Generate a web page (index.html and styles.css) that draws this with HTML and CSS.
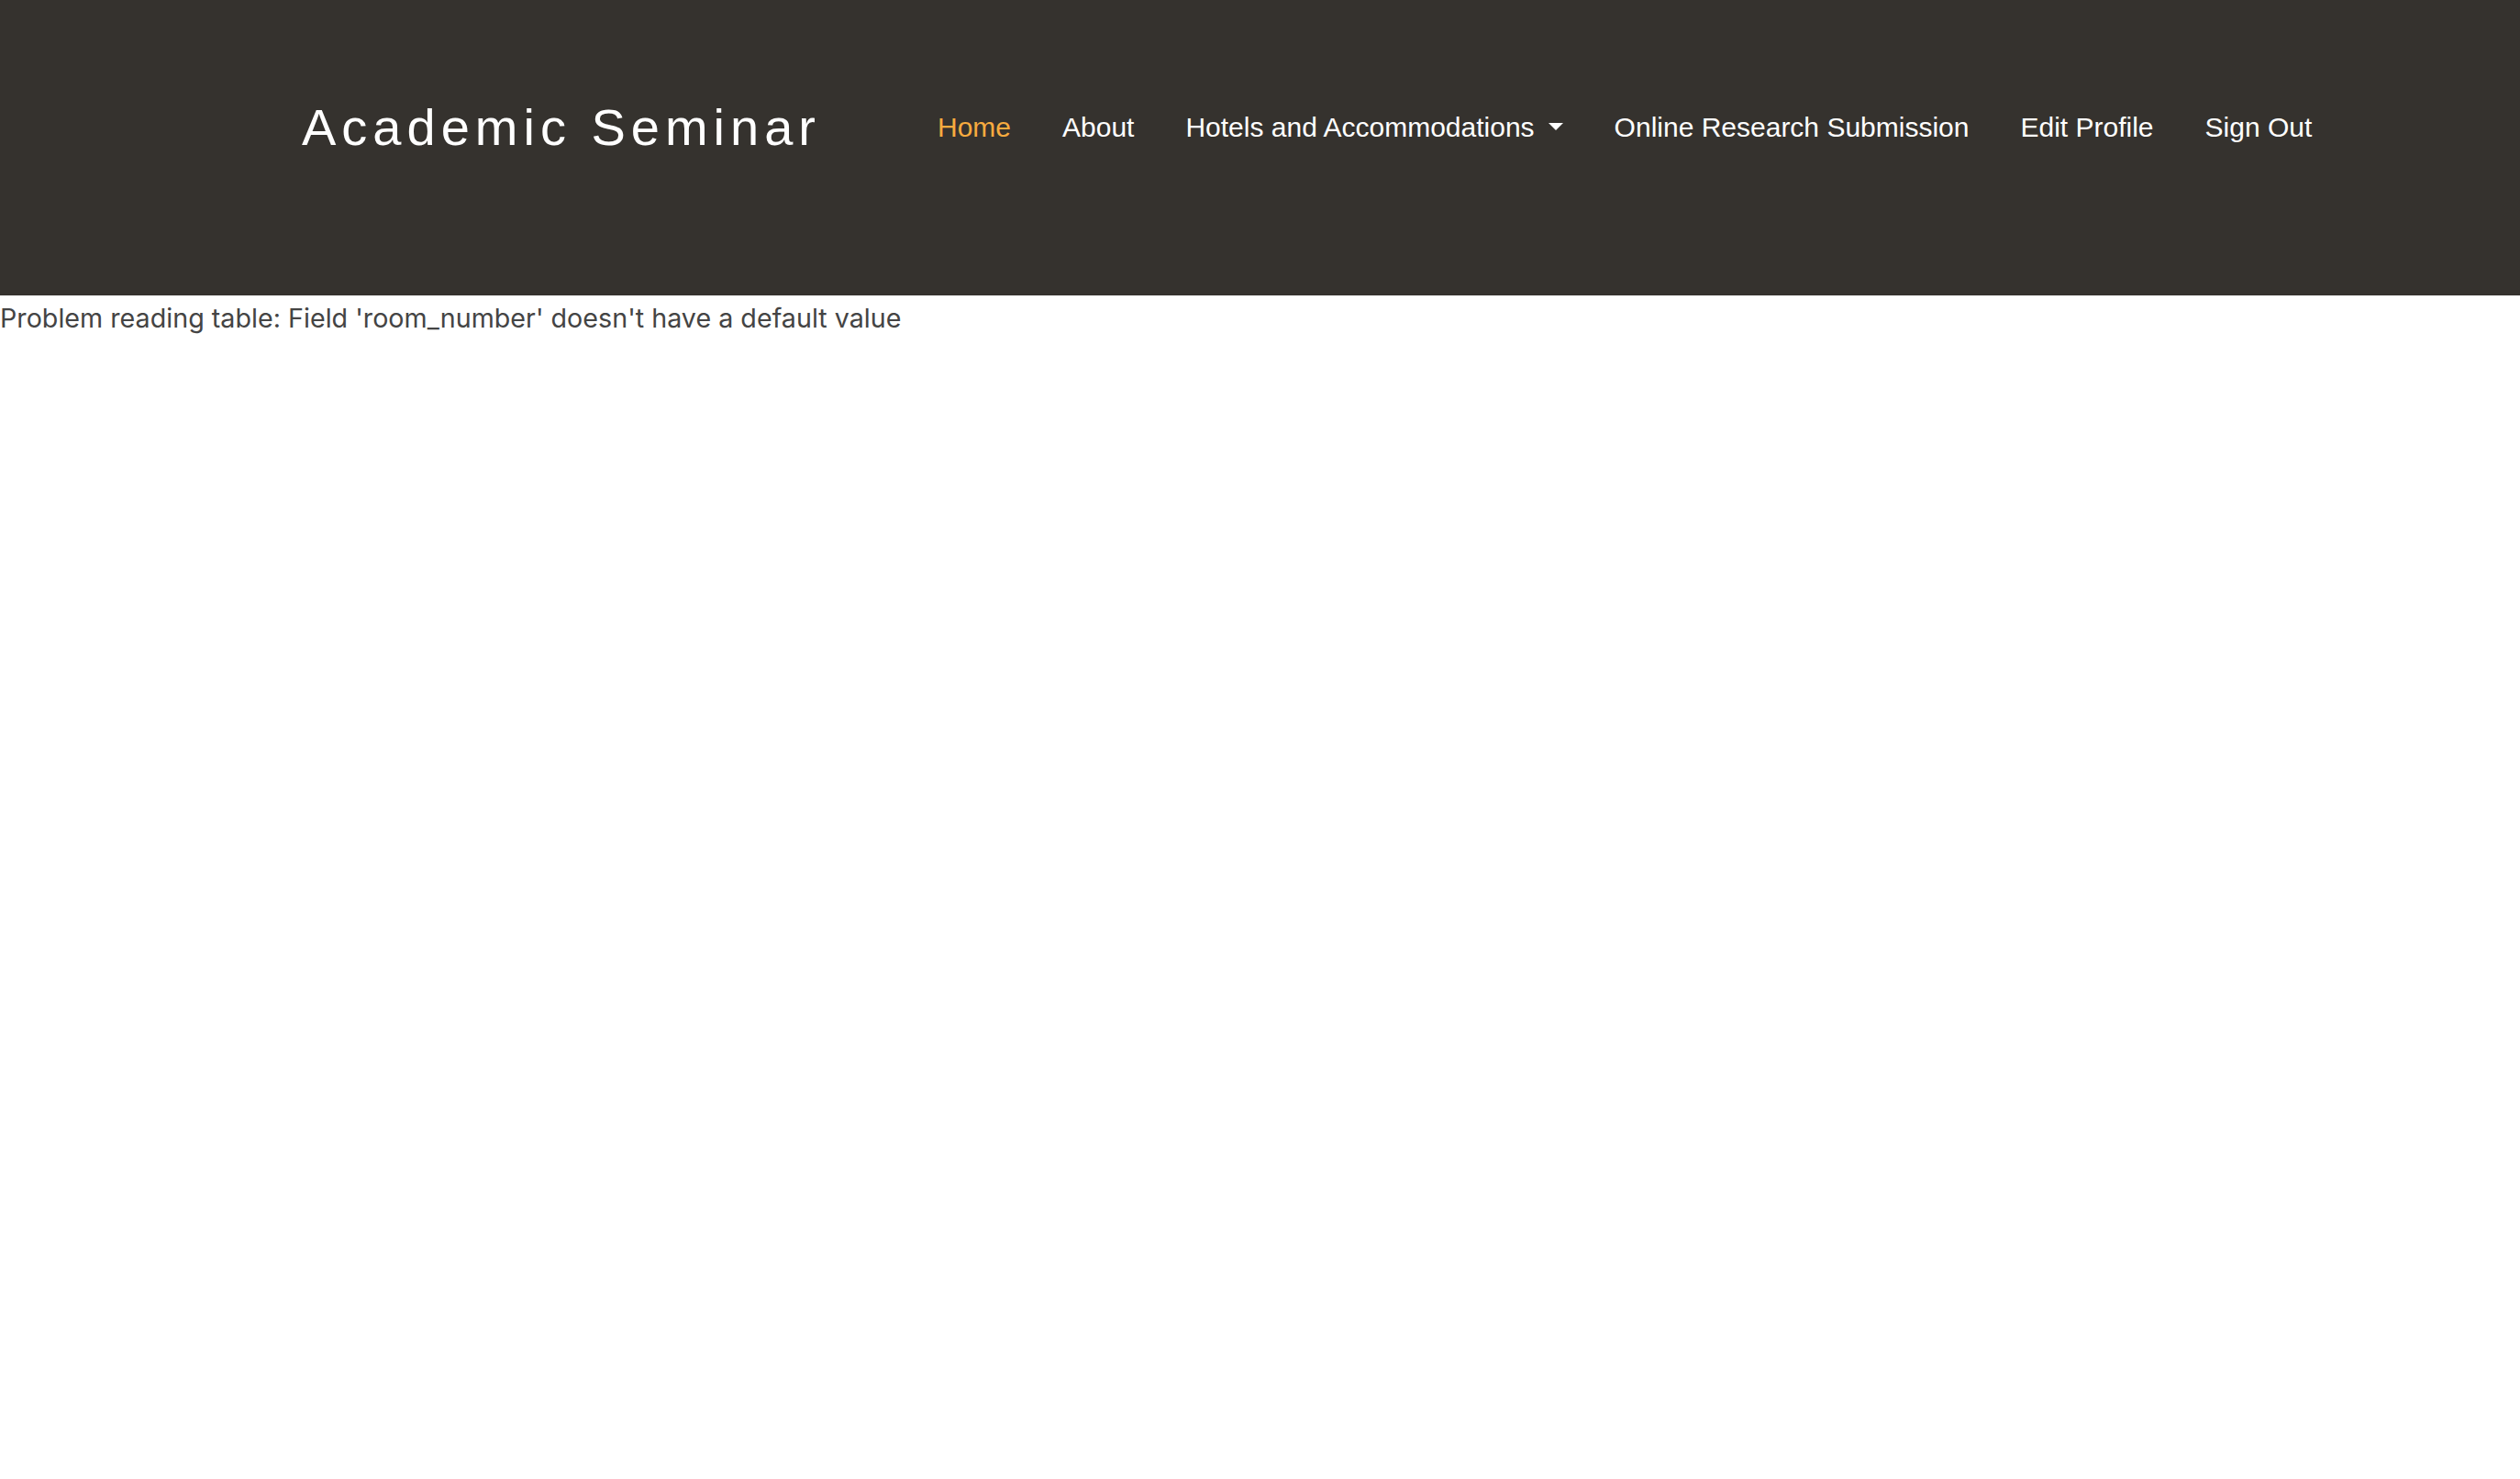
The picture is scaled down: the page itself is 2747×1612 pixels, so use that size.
FILE: index.html
```html
<!DOCTYPE html>
<html lang="en">
<head>
<meta charset="utf-8">
<title>Academic Seminar</title>
<link rel="stylesheet" href="styles.css">
</head>
<body>
<header class="site-header">
  <div class="header-inner">
    <a class="brand" href="#">Academic Seminar</a>
    <nav class="main-nav">
      <a class="nav-link active" href="#">Home</a>
      <a class="nav-link" href="#">About</a>
      <a class="nav-link dropdown" href="#">Hotels and Accommodations<span class="caret"></span></a>
      <a class="nav-link" href="#">Online Research Submission</a>
      <a class="nav-link" href="#">Edit Profile</a>
      <a class="nav-link" href="#">Sign Out</a>
    </nav>
  </div>
</header>
<p class="error-msg">Problem reading table: Field 'room_number' doesn't have a default value</p>
</body>
</html>
```

FILE: styles.css
```css
html, body {
  margin: 0;
  padding: 0;
  background: #ffffff;
}

body {
  font-family: Inter, "Liberation Sans", sans-serif;
  color: #444444;
}

.site-header {
  background: #35322e;
  height: 322px;
  box-sizing: border-box;
}

.header-inner {
  display: flex;
  align-items: flex-start;
  padding-left: 329px;
}

.brand {
  font-family: "Liberation Sans", Arial, sans-serif;
  font-size: 56px;
  letter-spacing: 6px;
  color: #ffffff;
  text-decoration: none;
  line-height: 1;
  padding-top: 111px;
  margin-right: 99px;
  white-space: nowrap;
}

.main-nav {
  display: flex;
  padding-top: 124px;
}

.nav-link {
  font-family: "Liberation Sans", Arial, sans-serif;
  font-size: 30px;
  line-height: 1;
  color: #ffffff;
  text-decoration: none;
  padding: 0 28px;
  white-space: nowrap;
  display: flex;
  align-items: center;
}

.nav-link.active {
  color: #f7ab3f;
}

.caret {
  display: inline-block;
  width: 0;
  height: 0;
  margin-left: 15px;
  margin-top: -2px;
  border-top: 8px solid #ffffff;
  border-left: 8.5px solid transparent;
  border-right: 8.5px solid transparent;
}

.error-msg {
  margin: 0;
  padding-top: 3px;
  font-size: 28.7px;
  line-height: 1.5;
}
```
